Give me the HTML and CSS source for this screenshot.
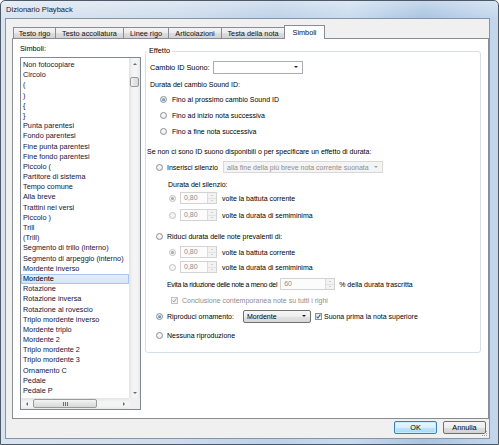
FILE: index.html
```html
<!DOCTYPE html>
<html>
<head>
<meta charset="utf-8">
<title>Dizionario Playback</title>
<link rel="stylesheet" href="styles.css">
</head>
<body>
<div class="window">
  <div class="titlebar"><span class="title">Dizionario Playback</span></div>
  <div class="client">
    <div class="tabs">
      <div class="tab w1">Testo rigo</div>
      <div class="tab w2">Testo accollatura</div>
      <div class="tab w3">Linee rigo</div>
      <div class="tab w4">Articolazioni</div>
      <div class="tab w5">Testa della nota</div>
      <div class="tab w6 sel">Simboli</div>
    </div>
    <div class="panel">
      <div class="leftcol">
        <div class="lbl">Simboli:</div>
        <div class="listbox">
          <div class="listmain">
            <div class="items">
              <div class="item">Non fotocopiare</div>
              <div class="item">Circolo</div>
              <div class="item">(</div>
              <div class="item">)</div>
              <div class="item">{</div>
              <div class="item">}</div>
              <div class="item">Punta parentesi</div>
              <div class="item">Fondo parentesi</div>
              <div class="item">Fine punta parentesi</div>
              <div class="item">Fine fondo parentesi</div>
              <div class="item">Piccolo (</div>
              <div class="item">Partitore di sistema</div>
              <div class="item">Tempo comune</div>
              <div class="item">Alla breve</div>
              <div class="item">Trattini nei versi</div>
              <div class="item">Piccolo )</div>
              <div class="item">Trill</div>
              <div class="item">(Trill)</div>
              <div class="item">Segmento di trillo (interno)</div>
              <div class="item">Segmento di arpeggio (interno)</div>
              <div class="item">Mordente inverso</div>
              <div class="item sel">Mordente</div>
              <div class="item">Rotazione</div>
              <div class="item">Rotazione inversa</div>
              <div class="item">Rotazione al rovescio</div>
              <div class="item">Triplo mordente inverso</div>
              <div class="item">Mordente triplo</div>
              <div class="item">Mordente 2</div>
              <div class="item">Triplo mordente 2</div>
              <div class="item">Triplo mordente 3</div>
              <div class="item">Ornamento C</div>
              <div class="item">Pedale</div>
              <div class="item">Pedale P</div>
            </div>
            <div class="vscroll">
              <div class="sbtn"><span class="ar-up"></span></div>
              <div class="vthumb"></div>
              <div class="vfill"></div>
              <div class="sbtn"><span class="ar-down"></span></div>
            </div>
          </div>
          <div class="hrow">
            <div class="hscroll">
              <div class="hbtn"><span class="ar-left"></span></div>
              <div class="hthumb">
                <svg width="7" height="4" viewBox="0 0 7 4"><path d="M1.5 0v4M3.5 0v4M5.5 0v4" stroke="#6f6f6f" stroke-width="1"/></svg>
              </div>
              <div class="hfill"></div>
              <div class="hbtn"><span class="ar-right"></span></div>
            </div>
            <div class="corner"></div>
          </div>
        </div>
      </div>

      <fieldset class="group">
        <legend>Effetto</legend>

        <div class="row m4 pl4">
          <span class="lab-cambio">Cambio ID Suono:</span>
          <div class="combo w-cambio"><span></span><span class="arrow"></span></div>
        </div>
        <div class="row m3 pl4">Durata del cambio Sound ID:</div>
        <div class="row m1 pl14"><span class="radio on"></span><span class="gap5">Fino al prossimo cambio Sound ID</span></div>
        <div class="row m2 pl14"><span class="radio"></span><span class="gap5">Fino ad inizio nota successiva</span></div>
        <div class="row m2 pl14"><span class="radio"></span><span class="gap5">Fino a fine nota successiva</span></div>

        <div class="row m6 pl1">Se non ci sono ID suono disponibili o per specificare un effetto di durata:</div>
        <div class="row m2 pl10">
          <span class="radio"></span><span class="gap4 lab-ins">Inserisci silenzio</span>
          <div class="combo dis w-ins"><span>alla fine della più breve nota corrente suonata</span><span class="arrow"></span></div>
        </div>
        <div class="row m3 pl22">Durata del silenzio:</div>
        <div class="row m0 pl23">
          <span class="radio dis on"></span>
          <div class="spin sp-short gap4"><span class="val">0,80</span><span class="spbtns"><span class="sp-up"></span><span class="sp-down"></span></span></div>
          <span class="gap5">volte la battuta corrente</span>
        </div>
        <div class="row m3 pl23">
          <span class="radio dis"></span>
          <div class="spin sp-short gap4"><span class="val">0,80</span><span class="spbtns"><span class="sp-up"></span><span class="sp-down"></span></span></div>
          <span class="gap5">volte la durata di semiminima</span>
        </div>

        <div class="row m7 pl10"><span class="radio"></span><span class="gap4">Riduci durata delle note prevalenti di:</span></div>
        <div class="row m2 pl23">
          <span class="radio dis on"></span>
          <div class="spin sp-short gap4"><span class="val">0,80</span><span class="spbtns"><span class="sp-up"></span><span class="sp-down"></span></span></div>
          <span class="gap5">volte la battuta corrente</span>
        </div>
        <div class="row m1 pl23">
          <span class="radio dis"></span>
          <div class="spin sp-short gap4"><span class="val">0,80</span><span class="spbtns"><span class="sp-up"></span><span class="sp-down"></span></span></div>
          <span class="gap5">volte la durata di semiminima</span>
        </div>
        <div class="row m3 pl21">
          <span class="lab-evita">Evita la riduzione delle note a meno del</span>
          <div class="spin sp-long"><span class="val">60</span><span class="spbtns"><span class="sp-up"></span><span class="sp-down"></span></span></div>
          <span class="gap4">% della durata trascritta</span>
        </div>
        <div class="row m2 pl25">
          <span class="chk dis"><svg width="5" height="5" viewBox="0 0 5 5"><path d="M0.6 2.6 L1.9 4 L4.4 0.6" fill="none" stroke="#9a9a9a" stroke-width="1"/></svg></span>
          <span class="gap4 txt-dis">Conclusione contemporanea note su tutti i righi</span>
        </div>

        <div class="row m2 pl10">
          <span class="radio on"></span><span class="gap4 lab-rip">Riproduci ornamento:</span>
          <div class="combo btnstyle w-rip"><span>Mordente</span><span class="arrow"></span></div>
          <span class="chk gap4"><svg width="5" height="5" viewBox="0 0 5 5"><path d="M0.6 2.6 L1.9 4 L4.4 0.6" fill="none" stroke="#2b5f9e" stroke-width="1.1"/></svg></span>
          <span class="gap2">Suona prima la nota superiore</span>
        </div>
        <div class="row m5 pl10"><span class="radio"></span><span class="gap4">Nessuna riproduzione</span></div>
      </fieldset>
    </div>

    <div class="buttons">
      <div class="btn ok">OK</div>
      <div class="btn">Annulla</div>
    </div>

    <svg class="grip" width="6" height="6" viewBox="0 0 6 6">
      <rect x="4" y="0" width="1" height="1" fill="#a0a0a0"/>
      <rect x="2" y="2" width="1" height="1" fill="#a0a0a0"/>
      <rect x="4" y="2" width="1" height="1" fill="#a0a0a0"/>
      <rect x="0" y="4" width="1" height="1" fill="#a0a0a0"/>
      <rect x="2" y="4" width="1" height="1" fill="#a0a0a0"/>
      <rect x="4" y="4" width="1" height="1" fill="#a0a0a0"/>
    </svg>
  </div>
</div>
</body>
</html>
```

FILE: styles.css
```css
* { box-sizing: border-box; }
html, body { margin: 0; padding: 0; }
body {
  width: 499px;
  height: 445px;
  overflow: hidden;
  background: #ffffff;
  font-family: "Liberation Sans", Arial, sans-serif;
  font-size: 7.3px;
  color: #000;
}

.window {
  width: 499px;
  height: 445px;
  border: 1px solid #4f5866;
  border-radius: 5px 5px 0 0;
  background:
    linear-gradient(to bottom, rgba(255,255,255,0.35), rgba(255,255,255,0) 18px),
    linear-gradient(to right, #d9e4f1 0%, #cfdcec 35%, #bdd1e8 55%, #c9dbee 70%, #a9c4e1 85%, #c3d7ec 100%);
  display: flex;
  flex-direction: column;
}

.titlebar {
  height: 17px;
  padding-left: 5px;
  display: flex;
  align-items: center;
  font-size: 7.6px;
  color: #1b1b1b;
}

.client {
  position: relative;
  margin-left: 4px;
  width: 485px;
  height: 421px;
  border: 1px solid #8594a6;
  background: #f0f0f0;
  display: flex;
  flex-direction: column;
}

/* Tabs */
.tabs {
  display: flex;
  align-items: flex-end;
  height: 13px;
  margin: 6px 0 0 7px;
  position: relative;
  z-index: 1;
}
.tab {
  height: 11px;
  border: 1px solid #898c95;
  border-bottom: none;
  margin-left: -1px;
  background: linear-gradient(#f3f3f3, #ebebeb 50%, #dedede 51%, #d2d2d2);
  display: flex;
  align-items: center;
  justify-content: center;
  white-space: nowrap;
  color: #111;
}
.tab:first-child { margin-left: 0; }
.tab.w1 { width: 43px; }
.tab.w2 { width: 69px; }
.tab.w3 { width: 46px; }
.tab.w4 { width: 54px; }
.tab.w5 { width: 64px; }
.tab.w6 { width: 41px; }
.tab.sel {
  height: 14px;
  margin-bottom: -1px;
  background: #ffffff;
  align-items: flex-start;
  padding-top: 2px;
}

/* Panel */
.panel {
  margin-left: 6px;
  width: 477px;
  height: 381px;
  border: 1px solid #898c95;
  background: #ffffff;
  display: flex;
  align-items: flex-start;
  padding: 5px 0 0 7px;
}

.leftcol {
  width: 121px;
  display: flex;
  flex-direction: column;
}
.lbl {
  height: 10px;
  line-height: 10px;
  margin-bottom: 3px;
}

.listbox {
  width: 121px;
  height: 353px;
  border: 1px solid #828790;
  display: flex;
  flex-direction: column;
  background: #fff;
}
.listmain {
  flex: 1;
  display: flex;
  min-height: 0;
}
.items {
  flex: 1;
  padding-top: 2px;
  overflow: hidden;
  color: #14143a;
}
.item {
  height: 10.2px;
  line-height: 10.2px;
  padding-left: 2px;
  white-space: nowrap;
}
.item.sel {
  background: linear-gradient(#e3effd, #d3e5fa);
  box-shadow: inset 0 0 0 1px #a9c7ec;
  color: #000;
}

.vscroll {
  width: 11px;
  display: flex;
  flex-direction: column;
  background: linear-gradient(to right, #e4e4e4, #f4f4f4 35%, #f4f4f4 70%, #e9e9e9);
}
.sbtn {
  height: 11px;
  display: flex;
  align-items: center;
  justify-content: center;
}
.vthumb {
  height: 10px;
  margin: 8px 1px 0 1px;
  border: 1px solid #9a9a9a;
  border-radius: 2px;
  background: linear-gradient(to right, #f5f5f5, #e4e4e4 50%, #d9d9d9);
}
.vfill { flex: 1; }

.ar-up, .ar-down, .ar-left, .ar-right { width: 0; height: 0; display: block; }
.ar-up { border-left: 2px solid transparent; border-right: 2px solid transparent; border-bottom: 2px solid #6a6a6a; }
.ar-down { border-left: 2px solid transparent; border-right: 2px solid transparent; border-top: 2px solid #6a6a6a; }
.ar-left { border-top: 2px solid transparent; border-bottom: 2px solid transparent; border-right: 2px solid #6a6a6a; }
.ar-right { border-top: 2px solid transparent; border-bottom: 2px solid transparent; border-left: 2px solid #6a6a6a; }

.hrow {
  height: 11px;
  display: flex;
}
.hscroll {
  flex: 1;
  display: flex;
  align-items: center;
  background: linear-gradient(#e4e4e4, #f4f4f4 35%, #f4f4f4 70%, #e9e9e9);
}
.hbtn {
  width: 11px;
  height: 11px;
  display: flex;
  align-items: center;
  justify-content: center;
}
.hthumb {
  width: 64px;
  height: 9px;
  margin-left: 1px;
  border: 1px solid #9a9a9a;
  border-radius: 2px;
  background: linear-gradient(#f5f5f5, #e4e4e4 50%, #d9d9d9);
  display: flex;
  align-items: center;
  justify-content: center;
}
.hfill { flex: 1; }
.corner {
  width: 11px;
  background: #f0f0f0;
}

/* Group box */
.group {
  margin: 2px 0 0 4px;
  width: 336px;
  height: 307px;
  border: 1px solid #d5dfe5;
  border-radius: 3px;
  padding: 0;
  min-width: 0;
  font-size: 7px;
}
.group legend {
  padding: 0 2px;
  margin-left: 1px;
  line-height: 10px;
  font-size: 7.3px;
}

.row {
  display: flex;
  align-items: center;
  height: 14px;
  white-space: nowrap;
}
.m0 { margin-top: 0; }
.m1 { margin-top: 1px; }
.m2 { margin-top: 2px; }
.m3 { margin-top: 3px; }
.m4 { margin-top: 4px; }
.m5 { margin-top: 5px; }
.m6 { margin-top: 6px; }
.m7 { margin-top: 7px; }
.pl1 { padding-left: 1px; }
.pl4 { padding-left: 4px; }
.pl10 { padding-left: 10px; }
.pl14 { padding-left: 14px; }
.pl21 { padding-left: 21px; }
.pl22 { padding-left: 22px; }
.pl23 { padding-left: 23px; }
.pl25 { padding-left: 25px; }
.gap2 { margin-left: 2px; }
.gap4 { margin-left: 4px; }
.gap5 { margin-left: 5px; }

.lab-cambio { width: 63px; font-size: 7.3px; }
.lab-ins { width: 56px; }
.lab-evita {
  flex: none;
  letter-spacing: -0.3px;
  margin-right: 3px;
}
.lab-rip { width: 76px; }
.txt-dis { color: #8d8d8d; }

/* Radio */
.radio {
  position: relative;
  flex: none;
  width: 7px;
  height: 7px;
  border-radius: 50%;
  border: 1px solid #8e8f8f;
  background: radial-gradient(circle at 50% 40%, #ffffff, #e0e0e0);
}
.radio.on::after {
  content: "";
  position: absolute;
  left: 1px;
  top: 1px;
  width: 3px;
  height: 3px;
  border-radius: 50%;
  background: radial-gradient(circle at 40% 35%, #8fc6f2, #1e5d9c);
}
.radio.dis {
  border-color: #c2c2c2;
  background: #f4f4f4;
}
.radio.dis.on::after {
  background: #a8a8a8;
}

/* Checkbox */
.chk {
  flex: none;
  width: 7px;
  height: 7px;
  border: 1px solid #8e8f8f;
  background: linear-gradient(135deg, #e2e2e2, #ffffff);
  display: flex;
  align-items: center;
  justify-content: center;
}
.chk.dis {
  border-color: #c2c2c2;
  background: #f4f4f4;
}
.chk svg { display: block; }

/* Combo boxes */
.combo {
  flex: none;
  height: 13px;
  border: 1px solid #abadb3;
  background: #ffffff;
  display: flex;
  align-items: center;
  justify-content: space-between;
  padding: 0 4px 0 3px;
}
.combo .arrow {
  width: 0;
  height: 0;
  border-left: 2px solid transparent;
  border-right: 2px solid transparent;
  border-top: 2px solid #222;
}
.w-cambio { width: 90px; }
.w-ins { width: 160px; height: 12px; }
.w-rip { width: 68px; }
.combo.dis {
  border-color: #d9d9d9;
  background: #f4f4f4;
  color: #8d8d8d;
}
.combo.dis .arrow { border-top-color: #a0a0a0; }
.combo.btnstyle {
  border-color: #707070;
  border-radius: 2px;
  background: linear-gradient(#f6f6f6, #ededed 50%, #e2e2e2 51%, #d8d8d8);
  color: #000;
}

/* Spin boxes */
.spin {
  flex: none;
  height: 12px;
  border: 1px solid #d3d3d3;
  background: #fcfcfc;
  display: flex;
  color: #8d8d8d;
}
.sp-short { width: 37px; }
.sp-long { width: 55px; }
.spin .val {
  flex: 1;
  padding-left: 3px;
  line-height: 10px;
}
.spbtns {
  width: 9px;
  border-left: 1px solid #dcdcdc;
  display: flex;
  flex-direction: column;
}
.sp-up, .sp-down {
  flex: 1;
  display: flex;
  align-items: center;
  justify-content: center;
  background: #f2f2f2;
}
.sp-up { border-bottom: 1px solid #e2e2e2; }
.sp-up::after, .sp-down::after {
  content: "";
  width: 0;
  height: 0;
  border-left: 1.5px solid transparent;
  border-right: 1.5px solid transparent;
}
.sp-up::after { border-bottom: 1.5px solid #b0b0b0; }
.sp-down::after { border-top: 1.5px solid #b0b0b0; }

/* Buttons */
.buttons {
  margin-top: 2px;
  display: flex;
  justify-content: flex-end;
  gap: 6px;
  padding-right: 3px;
}
.btn {
  width: 43px;
  height: 13px;
  border: 1px solid #707070;
  border-radius: 2px;
  background: linear-gradient(#f4f4f4, #ececec 50%, #dddddd 51%, #d3d3d3);
  display: flex;
  align-items: center;
  justify-content: center;
  color: #000;
}
.btn.ok {
  border-color: #3c7fb1;
  background: linear-gradient(#eaf6fd, #d9f0fc 50%, #bee6fd 51%, #a7d9f5);
  box-shadow: inset 0 0 0 1px #c5ecff;
}

.grip {
  position: absolute;
  right: 1px;
  bottom: 1px;
}
```
